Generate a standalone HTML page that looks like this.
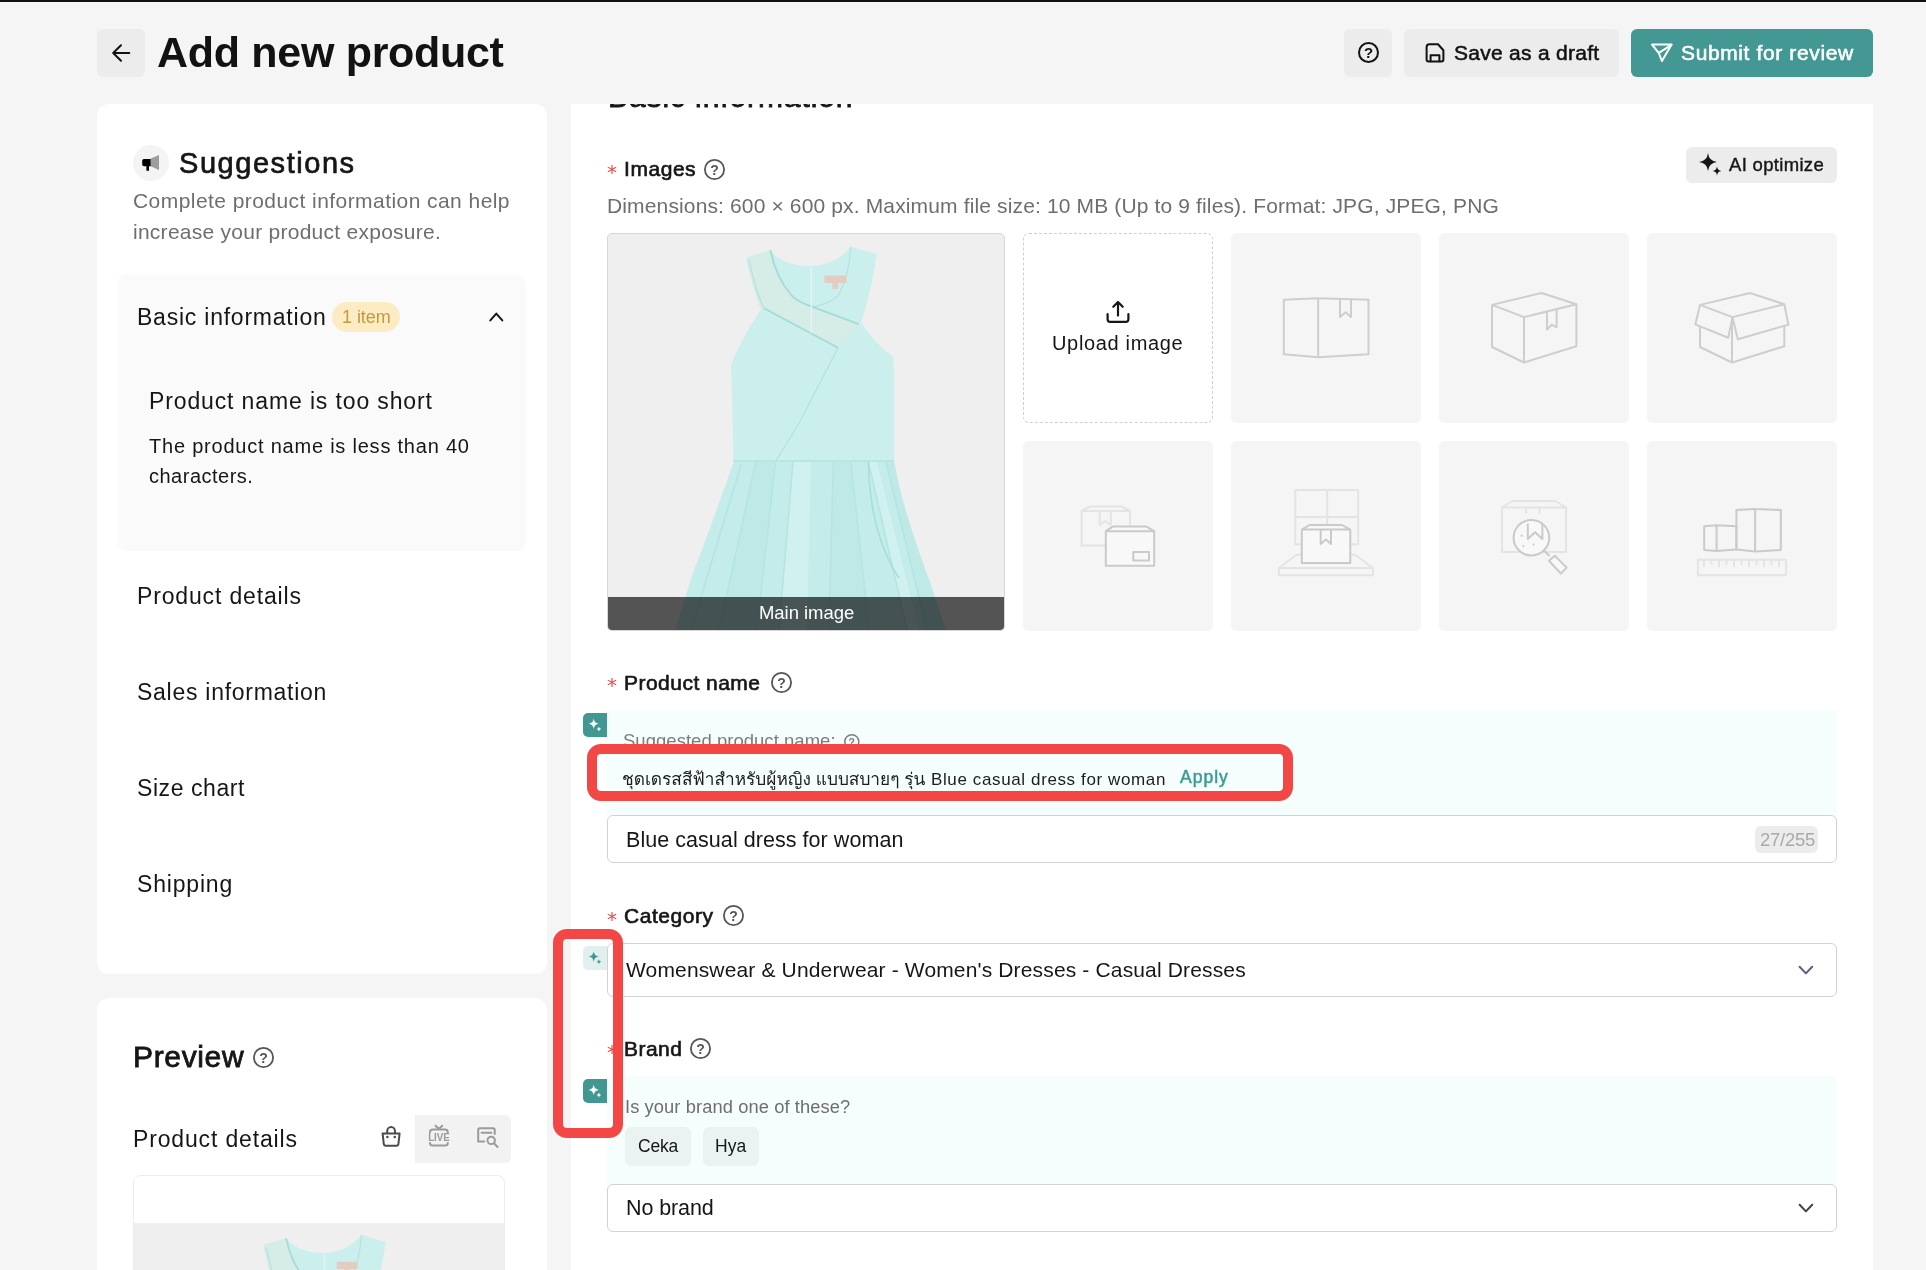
<!DOCTYPE html>
<html lang="en"><head><meta charset="utf-8"><title>Add new product</title>
<style>
html,body{margin:0;padding:0}
body{width:1926px;height:1270px;position:relative;overflow:hidden;background:#f5f5f5;font-family:"Liberation Sans", "Noto Sans Thai", "Noto Sans Thai UI", "Loma", "Garuda", "DejaVu Sans", sans-serif;}
.b{position:absolute;box-sizing:border-box;display:block}
.t{position:absolute;white-space:pre;line-height:1;display:block;will-change:transform}
svg{overflow:visible;will-change:transform}
</style></head><body>
<div class="b" style="left:0px;top:0px;width:1926px;height:2px;background:#111;"></div>
<div class="b" style="left:97px;top:29px;width:48px;height:48px;background:#ececec;border-radius:6px;"></div>
<div class="b" style="left:1344px;top:29px;width:48px;height:48px;background:#ececec;border-radius:6px;"></div>
<div class="b" style="left:1404px;top:29px;width:215px;height:48px;background:#ececec;border-radius:6px;"></div>
<div class="b" style="left:1631px;top:29px;width:242px;height:48px;background:#439894;border-radius:6px;"></div>
<span class="t" style="left:156.6px;top:31.20px;font-size:43px;color:#121212;font-weight:700;letter-spacing:-0.3px;">Add new product</span>
<span class="t" style="left:1453.5px;top:42.20px;font-size:21px;color:#121212;letter-spacing:0.28px;-webkit-text-stroke:0.55px #121212;">Save as a draft</span>
<span class="t" style="left:1680.5px;top:42.20px;font-size:21px;color:#ffffff;letter-spacing:0.62px;-webkit-text-stroke:0.55px #ffffff;">Submit for review</span>
<svg class="b" style="left:1356.5px;top:41.3px" width="23.0" height="23.0" viewBox="-11.5 -11.5 23.0 23.0"><circle cx="0" cy="0" r="9.50" fill="none" stroke="#121212" stroke-width="2"/><text x="0" y="5.40" text-anchor="middle" font-family="Liberation Sans, sans-serif" font-weight="700" font-size="15" fill="#121212">?</text></svg>
<svg class="b" style="left:0;top:0;" width="1926" height="1270" viewBox="0 0 1926 1270"><g fill="none" stroke="#121212" stroke-width="2" stroke-linecap="round" stroke-linejoin="round">
<path d="M129.3 53H113.5M121 45.2L113.2 53L121 60.8"/>
<path d="M1429.5 44.3H1438L1443.4 50.2V59.5Q1443.4 61.5 1441.4 61.5H1428.6Q1426.6 61.5 1426.6 59.5V47.2Q1426.6 44.3 1429.5 44.3Z"/>
<path d="M1430.6 61.3V55.3H1439.4V61.3"/>
</g>
<g fill="none" stroke="#ffffff" stroke-width="2" stroke-linecap="round" stroke-linejoin="round">
<path d="M1652 44.6H1671.6L1661.9 61L1658.8 53L1652 44.6Z"/><path d="M1671.4 44.8L1658.9 52.9"/>
</g></svg>
<div class="b" style="left:97px;top:104px;width:450px;height:870px;background:#ffffff;border-radius:12px;"></div>
<div class="b" style="left:133px;top:145px;width:36px;height:36px;background:#f4f4f4;border-radius:18px;"></div>
<svg class="b" style="left:0;top:0;" width="1926" height="1270" viewBox="0 0 1926 1270"><path d="M144 159H150.8V166.2H149V170.8H146.4V166.2H144Q142.2 166.2 142.2 164.4V160.8Q142.2 159 144 159Z" fill="#000"/>
<path d="M150.8 158.4L159 154.9V170.1L150.8 166.2Z" fill="#9e9e9e"/></svg>
<span class="t" style="left:178.5px;top:148.80px;font-size:29px;color:#161616;letter-spacing:1.55px;-webkit-text-stroke:0.7px #161616;">Suggestions</span>
<span class="t" style="left:133.3px;top:190.20px;font-size:21px;color:#6e6e6e;letter-spacing:0.44px;">Complete product information can help</span>
<span class="t" style="left:133.3px;top:221.20px;font-size:21px;color:#6e6e6e;letter-spacing:0.26px;">increase your product exposure.</span>
<div class="b" style="left:118px;top:275px;width:408px;height:276px;background:#fafafa;border-radius:8px;"></div>
<span class="t" style="left:136.5px;top:306.30px;font-size:23px;color:#161616;letter-spacing:0.77px;">Basic information</span>
<div class="b" style="left:332px;top:302px;width:68px;height:30px;background:#fbecc4;border-radius:15px;"></div>
<span class="t" style="left:341.5px;top:308.30px;font-size:18px;color:#c49a3c;letter-spacing:-0.05px;">1 item</span>
<svg class="b" style="left:0;top:0;" width="1926" height="1270" viewBox="0 0 1926 1270"><path d="M490.3 320.4L496.3 313.6L502.3 320.4" fill="none" stroke="#161616" stroke-width="2" stroke-linecap="round" stroke-linejoin="round"/></svg>
<span class="t" style="left:148.5px;top:390.00px;font-size:23px;color:#161616;letter-spacing:0.87px;">Product name is too short</span>
<span class="t" style="left:148.5px;top:435.80px;font-size:20px;color:#161616;letter-spacing:0.78px;">The product name is less than 40</span>
<span class="t" style="left:148.5px;top:465.80px;font-size:20px;color:#161616;letter-spacing:0.5px;">characters.</span>
<span class="t" style="left:136.5px;top:585.00px;font-size:23px;color:#161616;letter-spacing:0.85px;">Product details</span>
<span class="t" style="left:136.5px;top:681.00px;font-size:23px;color:#161616;letter-spacing:0.73px;">Sales information</span>
<span class="t" style="left:136.5px;top:777.00px;font-size:23px;color:#161616;letter-spacing:0.58px;">Size chart</span>
<span class="t" style="left:136.5px;top:873.00px;font-size:23px;color:#161616;letter-spacing:0.82px;">Shipping</span>
<div class="b" style="left:97px;top:998px;width:450px;height:300px;background:#ffffff;border-radius:12px;"></div>
<span class="t" style="left:133.0px;top:1041.80px;font-size:30px;color:#161616;letter-spacing:0.65px;-webkit-text-stroke:0.8px #161616;">Preview</span>
<svg class="b" style="left:251.5px;top:1045.8px" width="23.0" height="23.0" viewBox="-11.5 -11.5 23.0 23.0"><circle cx="0" cy="0" r="9.60" fill="none" stroke="#555" stroke-width="1.8"/><text x="0" y="5.04" text-anchor="middle" font-family="Liberation Sans, sans-serif" font-weight="700" font-size="14" fill="#555">?</text></svg>
<span class="t" style="left:133.0px;top:1128.00px;font-size:23px;color:#161616;letter-spacing:0.85px;">Product details</span>
<div class="b" style="left:415px;top:1115px;width:96px;height:48px;background:#f2f2f2;border-radius:0 6px 6px 0;"></div>
<svg class="b" style="left:0;top:0;" width="1926" height="1270" viewBox="0 0 1926 1270"><g fill="none" stroke="#4a4a4a" stroke-width="2" stroke-linecap="round" stroke-linejoin="round">
<path d="M382.6 1133.4H399.6L398.4 1144Q398.2 1145.7 396.4 1145.7H385.8Q384 1145.7 383.8 1144Z"/>
<path d="M387.2 1133V1131.3A3.9 4.3 0 0 1 395 1131.3V1133"/>
</g><circle cx="387.4" cy="1137" r="1.3" fill="#4a4a4a"/><circle cx="394.8" cy="1137" r="1.3" fill="#4a4a4a"/>
<g fill="none" stroke="#9b9b9b" stroke-width="2" stroke-linecap="round" stroke-linejoin="round">
<path d="M435.6 1125.8L438.9 1128.9L442.2 1125.8"/>
<path d="M430 1132.2Q430 1129.6 432.8 1129.6H445Q447.8 1129.6 447.8 1132.2"/>
<path d="M430 1143Q430 1145.6 432.8 1145.6H445Q447.8 1145.6 447.8 1143"/>
<path d="M478.2 1141.6Q478.2 1141.6 479.5 1141.6H484.2M478.2 1141.6V1130Q478.2 1128.3 479.9 1128.3H493Q494.7 1128.3 494.7 1130V1134"/>
<path d="M481.6 1132.8H491.4"/>
<circle cx="491.2" cy="1140.4" r="3.7"/><path d="M494 1143.3L497.6 1147"/>
</g>
<text x="439" y="1140.9" text-anchor="middle" font-family="Liberation Sans, sans-serif" font-weight="700" font-size="10.2" fill="#9b9b9b" textLength="21.6" lengthAdjust="spacingAndGlyphs">LIVE</text></svg>
<div class="b" style="left:133px;top:1175px;width:372px;height:120px;background:#ffffff;border-radius:8px;border:1px solid #ececec;overflow:hidden;"><div class="b" style="left:0;top:47px;width:373px;height:80px;background:#efefef"></div><svg class="b" style="left:0;top:47px" width="371" height="371" viewBox="1 1 396 396"><g>
<path d="M139.3 24.5L163.4 16.9C170 27 185 33 203.6 33C222 33 236 24 243.7 13.6L269.7 21.2C267 40 262 65 254.2 88.9C262 103 275 115 286.2 124L287.2 145V228C292 260 305 300 322.4 347.8L338.9 397.4H68.2L84.7 343.7C100 305 115 262 126.5 230V228L125 165L124 132.3C130 115 142 95 154 76.5C147 58 142 40 139.3 24.5Z" fill="#cbefec"/>
<path d="M126.5 228H287.2C292 260 305 300 322.4 347.8L338.9 397.4H68.2L84.7 343.7C100 305 115 262 126.5 230Z" fill="#c3ecea"/>
<path d="M148.8 229L112 397H150L168.4 229ZM226.3 229L222 397H262L243.9 229ZM279 229L320 397H339L322.4 347.8C305 300 292 260 287.2 229Z" fill="#b9e7e4" opacity="0.55"/>
<path d="M186 229L172 397H200L204 229ZM261.4 229L300 397H312L270 229Z" fill="#d9f5f3" opacity="0.6"/>
<path d="M139.3 25.9L163.4 17.4C166 30 172 48 184.7 62.7C190 68 197 71 203.6 73.1L251.7 91.1L231 114.7L159.2 76.4L154 76.5C147 58 142 40 139.3 25.9Z" fill="#d6ece6"/>
<path d="M163.4 17.4C166 30 172 48 184.7 62.7C190 68 197 71 203.6 73.1L251.7 91.1M157 75.2L231 114.7" fill="none" stroke="#a3dbd7" stroke-width="1.8"/>
<path d="M243.7 14.1C243 28 240.4 44.8 231.9 61.8C226 68 219 71 204.5 74.5M231 114.7L192.2 190L169.5 226.9M142 27C146 45 150 62 157 75.2" fill="none" stroke="#b4e2de" stroke-width="1.2"/>
<path d="M126.5 228H287.2" stroke="#b4e2de" stroke-width="1.4" fill="none"/>
<path d="M204.3 34V100" stroke="#e4f6f4" stroke-width="1.2" fill="none"/>
<path d="M148.8 229L112 397M168.4 229L150 397M186 229L172 397M226.3 229L222 397M243.9 229L262 397M261.4 229L300 397M279 229L320 397M134 232L84 397" fill="none" stroke="#b5e5e2" stroke-width="1.6"/>
<path d="M261.4 229C262 280 275 320 292 345" fill="none" stroke="#a9dedb" stroke-width="1.6"/>
<path d="M217.3 42.4H239.5V50H231V56.1H225.3V50H217.3Z" fill="#e3cdc3"/>
</g></svg></div>
<div class="b" style="left:571px;top:104px;width:1302px;height:1180px;background:#ffffff;"></div>
<div class="b" style="left:571px;top:104px;width:600px;height:20px;overflow:hidden">
<span class="t" style="left:37.0px;top:-22.20px;font-size:30px;color:#161616;letter-spacing:0.9px;-webkit-text-stroke:0.8px #161616;">Basic information</span>
</div>
<span class="t" style="left:607.1px;top:161.90px;font-size:20px;color:#ea4b48;font-family:'DejaVu Sans','Liberation Sans',sans-serif;">*</span>
<span class="t" style="left:624.0px;top:158.20px;font-size:21px;color:#161616;letter-spacing:0.55px;-webkit-text-stroke:0.65px #161616;">Images</span>
<svg class="b" style="left:703.4px;top:157.5px" width="23.0" height="23.0" viewBox="-11.5 -11.5 23.0 23.0"><circle cx="0" cy="0" r="9.60" fill="none" stroke="#555" stroke-width="1.8"/><text x="0" y="5.04" text-anchor="middle" font-family="Liberation Sans, sans-serif" font-weight="700" font-size="14" fill="#555">?</text></svg>
<span class="t" style="left:607.0px;top:194.90px;font-size:21px;color:#6e6e6e;letter-spacing:0.14px;">Dimensions: 600 × 600 px. Maximum file size: 10 MB (Up to 9 files). Format: JPG, JPEG, PNG</span>
<div class="b" style="left:1686px;top:147px;width:151px;height:36px;background:#ececec;border-radius:6px;"></div>
<svg class="b" style="left:0;top:0;" width="1926" height="1270" viewBox="0 0 1926 1270"><path d="M1708.00 153.10Q1708.89 161.11 1716.90 162.00Q1708.89 162.89 1708.00 170.90Q1707.11 162.89 1699.10 162.00Q1707.11 161.11 1708.00 153.10ZM1717.00 166.60Q1717.44 170.56 1721.40 171.00Q1717.44 171.44 1717.00 175.40Q1716.56 171.44 1712.60 171.00Q1716.56 170.56 1717.00 166.60Z" fill="#161616"/></svg>
<span class="t" style="left:1728.5px;top:156.00px;font-size:18.5px;color:#161616;letter-spacing:0.32px;-webkit-text-stroke:0.4px #161616;">AI optimize</span>
<div class="b" style="left:607px;top:233px;width:398px;height:398px;background:#efefef;border:1px solid #d6d6d6;border-radius:5px;overflow:hidden"><svg class="b" style="left:0;top:0" width="396" height="396" viewBox="1 1 396 396"><g>
<path d="M139.3 24.5L163.4 16.9C170 27 185 33 203.6 33C222 33 236 24 243.7 13.6L269.7 21.2C267 40 262 65 254.2 88.9C262 103 275 115 286.2 124L287.2 145V228C292 260 305 300 322.4 347.8L338.9 397.4H68.2L84.7 343.7C100 305 115 262 126.5 230V228L125 165L124 132.3C130 115 142 95 154 76.5C147 58 142 40 139.3 24.5Z" fill="#cbefec"/>
<path d="M126.5 228H287.2C292 260 305 300 322.4 347.8L338.9 397.4H68.2L84.7 343.7C100 305 115 262 126.5 230Z" fill="#c3ecea"/>
<path d="M148.8 229L112 397H150L168.4 229ZM226.3 229L222 397H262L243.9 229ZM279 229L320 397H339L322.4 347.8C305 300 292 260 287.2 229Z" fill="#b9e7e4" opacity="0.55"/>
<path d="M186 229L172 397H200L204 229ZM261.4 229L300 397H312L270 229Z" fill="#d9f5f3" opacity="0.6"/>
<path d="M139.3 25.9L163.4 17.4C166 30 172 48 184.7 62.7C190 68 197 71 203.6 73.1L251.7 91.1L231 114.7L159.2 76.4L154 76.5C147 58 142 40 139.3 25.9Z" fill="#d6ece6"/>
<path d="M163.4 17.4C166 30 172 48 184.7 62.7C190 68 197 71 203.6 73.1L251.7 91.1M157 75.2L231 114.7" fill="none" stroke="#a3dbd7" stroke-width="1.8"/>
<path d="M243.7 14.1C243 28 240.4 44.8 231.9 61.8C226 68 219 71 204.5 74.5M231 114.7L192.2 190L169.5 226.9M142 27C146 45 150 62 157 75.2" fill="none" stroke="#b4e2de" stroke-width="1.2"/>
<path d="M126.5 228H287.2" stroke="#b4e2de" stroke-width="1.4" fill="none"/>
<path d="M204.3 34V100" stroke="#e4f6f4" stroke-width="1.2" fill="none"/>
<path d="M148.8 229L112 397M168.4 229L150 397M186 229L172 397M226.3 229L222 397M243.9 229L262 397M261.4 229L300 397M279 229L320 397M134 232L84 397" fill="none" stroke="#b5e5e2" stroke-width="1.6"/>
<path d="M261.4 229C262 280 275 320 292 345" fill="none" stroke="#a9dedb" stroke-width="1.6"/>
<path d="M217.3 42.4H239.5V50H231V56.1H225.3V50H217.3Z" fill="#e3cdc3"/>
</g></svg><div class="b" style="left:0;top:363px;width:396px;height:33px;background:rgba(0,0,0,0.65)"></div></div>
<span class="t" style="left:758.5px;top:604.20px;font-size:18.5px;color:#ffffff;letter-spacing:-0.05px;">Main image</span>
<div class="b" style="left:1023px;top:233px;width:190px;height:190px;background:#ffffff;border-radius:6px;border:1px dashed #cfcfcf;"></div>
<svg class="b" style="left:0;top:0;" width="1926" height="1270" viewBox="0 0 1926 1270"><g fill="none" stroke="#161616" stroke-width="2.2" stroke-linecap="round" stroke-linejoin="round">
<path d="M1107.6 314.2V319.2Q1107.6 321.8 1110.2 321.8H1125.8Q1128.4 321.8 1128.4 319.2V314.2"/>
<path d="M1118 315.6V302.2M1113.3 306.8L1118 302L1122.7 306.8"/></g></svg>
<span class="t" style="left:1052.3px;top:332.80px;font-size:20px;color:#161616;letter-spacing:0.66px;">Upload image</span>
<div class="b" style="left:1231px;top:233px;width:190px;height:190px;background:#f5f5f5;border-radius:6px;"></div>
<div class="b" style="left:1439px;top:233px;width:190px;height:190px;background:#f5f5f5;border-radius:6px;"></div>
<div class="b" style="left:1647px;top:233px;width:190px;height:190px;background:#f5f5f5;border-radius:6px;"></div>
<div class="b" style="left:1023px;top:441px;width:190px;height:190px;background:#f5f5f5;border-radius:6px;"></div>
<div class="b" style="left:1231px;top:441px;width:190px;height:190px;background:#f5f5f5;border-radius:6px;"></div>
<div class="b" style="left:1439px;top:441px;width:190px;height:190px;background:#f5f5f5;border-radius:6px;"></div>
<div class="b" style="left:1647px;top:441px;width:190px;height:190px;background:#f5f5f5;border-radius:6px;"></div>
<svg class="b" style="left:0;top:0;" width="1926" height="1270" viewBox="0 0 1926 1270"><g fill="none" stroke="#cecece" stroke-width="2" stroke-linejoin="round">
<path d="M1283.8 299.7L1318.2 298.2V357.2L1283.8 354.3ZM1318.2 298.2L1368.5 299.7V354.3L1318.2 357.2"/>
<path d="M1340 299V317L1345.5 312.3L1351 317V299.3"/>
<path d="M1492 304.9L1541.5 293L1576.4 304.3L1524 317.1ZM1492 304.9V347L1524 362.5V317.1M1524 362.5L1576.4 346.2V304.3"/>
<path d="M1547 311.8V329.6L1551.7 324.7L1556.6 327.3V309.5"/>
<path d="M1700 304.9L1750 293L1784.3 304.3L1732.5 317.1ZM1700 304.9L1695.3 324.4L1728.2 337.8L1732.5 317.1L1737.8 339.2L1788.4 324.7L1784.3 304.3"/>
<path d="M1700 326.5V347L1732 362.5V322M1732 362.5L1784.3 346.2V326"/>
</g>
<g fill="none" stroke="#e4e4e4" stroke-width="2" stroke-linejoin="round">
<path d="M1081.6 511H1129.9V545.4H1081.6ZM1081.6 511L1090.4 506.5H1121.4L1129.9 511"/>
<path d="M1099.7 511.8V524.9L1105.2 521L1110.8 524.9V511.8"/>
<path d="M1295.3 490.1H1358.2V544.2H1295.3ZM1327.2 490.1V544.2M1295.3 517H1358.2"/>
<path d="M1278.9 568L1296.6 554.8H1354.9L1373 568ZM1278.9 568H1373V575.2H1278.9Z"/>
<path d="M1502 507.5H1566.1V552.1H1502ZM1502 507.5L1512.4 501H1555.2L1566.1 507.5M1526.2 507.5V513.4M1539.6 507.5V513.4"/>
<path d="M1697.9 559.8H1786.1V575.2H1697.9ZM1704 560V567M1711.5 560V565M1719 560V567M1726.5 560V565M1734 560V567M1741.5 560V565M1749 560V567M1756.5 560V565M1764 560V567M1771.5 560V565M1779 560V567"/>
</g>
<g fill="#f8f8f8" stroke="#cacaca" stroke-width="2" stroke-linejoin="round">
<path d="M1105.8 531.2H1154.2V565.7H1105.8ZM1105.8 531.2L1112.7 526.6H1146.3L1154.2 531.2"/>
<path d="M1133.3 551.9H1149V560.4H1133.3Z"/>
<path d="M1301.8 529.6H1350.3V563.1H1301.8ZM1301.8 529.6L1309.5 525H1342L1350.3 529.6"/>
<path d="M1320.7 530V544L1325.9 539.4L1331 544V530" fill="none"/>
<circle cx="1531.4" cy="537.7" r="17.8"/>
<path d="M1527.8 523.5V539L1535.1 532.2L1542.4 539V524" fill="none"/>
<path d="M1544.5 551L1549.5 556" fill="none"/>
<path d="M1549 560.8L1554.8 555.8L1566.6 567.6L1560.8 573.5Z"/>
<path d="M1704.2 526.2L1716.6 525.3V550.9L1704.2 549.9ZM1716.6 525.3L1736.4 526.2V549.6L1716.6 550.9" fill="none"/>
<path d="M1736.4 510L1755.1 508.9V551.5L1736.4 549.6ZM1755.1 508.9L1780.8 510V549.9L1755.1 551.5" fill="none"/>
</g>
<g fill="#cacaca"><circle cx="1521.7" cy="535.7" r="1.1"/><circle cx="1523.3" cy="546" r="1.1"/><circle cx="1533.5" cy="544.6" r="1.1"/></g></svg>
<span class="t" style="left:607.1px;top:675.30px;font-size:20px;color:#ea4b48;font-family:'DejaVu Sans','Liberation Sans',sans-serif;">*</span>
<span class="t" style="left:624.0px;top:671.60px;font-size:21px;color:#161616;letter-spacing:0.48px;-webkit-text-stroke:0.65px #161616;">Product name</span>
<svg class="b" style="left:769.5px;top:670.9px" width="23.0" height="23.0" viewBox="-11.5 -11.5 23.0 23.0"><circle cx="0" cy="0" r="9.60" fill="none" stroke="#555" stroke-width="1.8"/><text x="0" y="5.04" text-anchor="middle" font-family="Liberation Sans, sans-serif" font-weight="700" font-size="14" fill="#555">?</text></svg>
<div class="b" style="left:607px;top:710px;width:1230px;height:106px;background:#f5fefd;"></div>
<div class="b" style="left:583px;top:713px;width:24px;height:24px;background:#439793;border-radius:5px 0 0 5px;"></div>
<svg class="b" style="left:0;top:0;" width="1926" height="1270" viewBox="0 0 1926 1270"><path d="M593.70 718.50Q594.23 723.27 599.00 723.80Q594.23 724.33 593.70 729.10Q593.17 724.33 588.40 723.80Q593.17 723.27 593.70 718.50ZM598.90 726.50Q599.15 728.75 601.40 729.00Q599.15 729.25 598.90 731.50Q598.65 729.25 596.40 729.00Q598.65 728.75 598.90 726.50Z" fill="#ffffff"/></svg>
<span class="t" style="left:622.5px;top:732.20px;font-size:18.5px;color:#7d7d7d;letter-spacing:0.03px;">Suggested product name:</span>
<svg class="b" style="left:843.2px;top:732.7px" width="17.6" height="17.6" viewBox="-8.8 -8.8 17.6 17.6"><circle cx="0" cy="0" r="7.05" fill="none" stroke="#7d7d7d" stroke-width="1.5"/><text x="0" y="3.78" text-anchor="middle" font-family="Liberation Sans, sans-serif" font-weight="700" font-size="10.5" fill="#7d7d7d">?</text></svg>
<span class="t" style="left:622.0px;top:770.90px;font-size:17.3px;color:#1c1c1c;font-family:'Liberation Sans','Garuda','Loma','Noto Sans Thai',sans-serif;">ชุดเดรสสีฟ้าสำหรับผู้หญิง แบบสบายๆ รุ่น</span>
<span class="t" style="left:931.3px;top:770.80px;font-size:17px;color:#1c1c1c;letter-spacing:0.62px;">Blue casual dress for woman</span>
<span class="t" style="left:1180.2px;top:768.70px;font-size:17.5px;color:#3b9b95;letter-spacing:1.0px;-webkit-text-stroke:0.5px #3b9b95;">Apply</span>
<div class="b" style="left:607px;top:815px;width:1230px;height:47.5px;background:#ffffff;border-radius:6px;border:1px solid #d2d2d2;"></div>
<span class="t" style="left:626.0px;top:830.20px;font-size:21.5px;color:#161616;letter-spacing:0.05px;">Blue casual dress for woman</span>
<div class="b" style="left:1755px;top:826px;width:63px;height:26.5px;background:#ececec;border-radius:6px;"></div>
<span class="t" style="left:1759.5px;top:831.00px;font-size:18.5px;color:#a9a9a9;letter-spacing:-0.25px;">27/255</span>
<span class="t" style="left:607.1px;top:908.50px;font-size:20px;color:#ea4b48;font-family:'DejaVu Sans','Liberation Sans',sans-serif;">*</span>
<span class="t" style="left:624.0px;top:904.80px;font-size:21px;color:#161616;letter-spacing:0.55px;-webkit-text-stroke:0.65px #161616;">Category</span>
<svg class="b" style="left:722.3px;top:903.6px" width="23.0" height="23.0" viewBox="-11.5 -11.5 23.0 23.0"><circle cx="0" cy="0" r="9.60" fill="none" stroke="#555" stroke-width="1.8"/><text x="0" y="5.04" text-anchor="middle" font-family="Liberation Sans, sans-serif" font-weight="700" font-size="14" fill="#555">?</text></svg>
<div class="b" style="left:607px;top:943px;width:1230px;height:53.5px;background:#ffffff;border-radius:6px;border:1px solid #d2d2d2;"></div>
<div class="b" style="left:583px;top:946px;width:24px;height:24px;background:#e1f0ef;border-radius:5px 0 0 5px;"></div>
<svg class="b" style="left:0;top:0;" width="1926" height="1270" viewBox="0 0 1926 1270"><path d="M593.70 951.30Q594.23 956.07 599.00 956.60Q594.23 957.13 593.70 961.90Q593.17 957.13 588.40 956.60Q593.17 956.07 593.70 951.30ZM598.90 959.30Q599.15 961.55 601.40 961.80Q599.15 962.05 598.90 964.30Q598.65 962.05 596.40 961.80Q598.65 961.55 598.90 959.30Z" fill="#439793"/></svg>
<span class="t" style="left:626.3px;top:959.00px;font-size:21px;color:#161616;letter-spacing:0.15px;">Womenswear &amp; Underwear - Women's Dresses - Casual Dresses</span>
<span class="t" style="left:607.1px;top:1041.70px;font-size:20px;color:#ea4b48;font-family:'DejaVu Sans','Liberation Sans',sans-serif;">*</span>
<span class="t" style="left:624.0px;top:1038.00px;font-size:21px;color:#161616;letter-spacing:0.45px;-webkit-text-stroke:0.65px #161616;">Brand</span>
<svg class="b" style="left:689.1px;top:1037.0px" width="23.0" height="23.0" viewBox="-11.5 -11.5 23.0 23.0"><circle cx="0" cy="0" r="9.60" fill="none" stroke="#555" stroke-width="1.8"/><text x="0" y="5.04" text-anchor="middle" font-family="Liberation Sans, sans-serif" font-weight="700" font-size="14" fill="#555">?</text></svg>
<div class="b" style="left:607px;top:1075.5px;width:1230px;height:109px;background:#f5fefd;"></div>
<div class="b" style="left:583px;top:1079px;width:24px;height:24px;background:#439793;border-radius:5px 0 0 5px;"></div>
<svg class="b" style="left:0;top:0;" width="1926" height="1270" viewBox="0 0 1926 1270"><path d="M593.70 1084.60Q594.23 1089.37 599.00 1089.90Q594.23 1090.43 593.70 1095.20Q593.17 1090.43 588.40 1089.90Q593.17 1089.37 593.70 1084.60ZM598.90 1092.60Q599.15 1094.85 601.40 1095.10Q599.15 1095.35 598.90 1097.60Q598.65 1095.35 596.40 1095.10Q598.65 1094.85 598.90 1092.60Z" fill="#ffffff"/></svg>
<span class="t" style="left:624.6px;top:1097.90px;font-size:18.3px;color:#6e6e6e;letter-spacing:0.1px;">Is your brand one of these?</span>
<div class="b" style="left:625px;top:1127px;width:66px;height:38.5px;background:#eaf3f2;border-radius:6px;"></div>
<div class="b" style="left:703px;top:1127px;width:56px;height:38.5px;background:#eaf3f2;border-radius:6px;"></div>
<span class="t" style="left:637.6px;top:1137.70px;font-size:17.5px;color:#161616;letter-spacing:-0.2px;">Ceka</span>
<span class="t" style="left:714.9px;top:1137.70px;font-size:17.5px;color:#161616;">Hya</span>
<div class="b" style="left:607px;top:1184px;width:1230px;height:47.5px;background:#ffffff;border-radius:6px;border:1px solid #d2d2d2;"></div>
<span class="t" style="left:626.3px;top:1197.80px;font-size:21.5px;color:#161616;letter-spacing:-0.1px;">No brand</span>
<svg class="b" style="left:0;top:0;" width="1926" height="1270" viewBox="0 0 1926 1270"><path d="M1799.6 966.8L1805.9 973.4L1812.2 966.8" fill="none" stroke="#5a607c" stroke-width="2" stroke-linecap="round" stroke-linejoin="round"/><path d="M1799.6 1204.8L1805.9 1211.4L1812.2 1204.8" fill="none" stroke="#444" stroke-width="2" stroke-linecap="round" stroke-linejoin="round"/></svg>
<div class="b" style="left:587px;top:744px;width:706px;height:57px;border-radius:14px;border:10px solid #f24744;"></div>
<div class="b" style="left:553px;top:929px;width:70px;height:209px;border-radius:14px;border:10px solid #f24744;"></div>
</body></html>
